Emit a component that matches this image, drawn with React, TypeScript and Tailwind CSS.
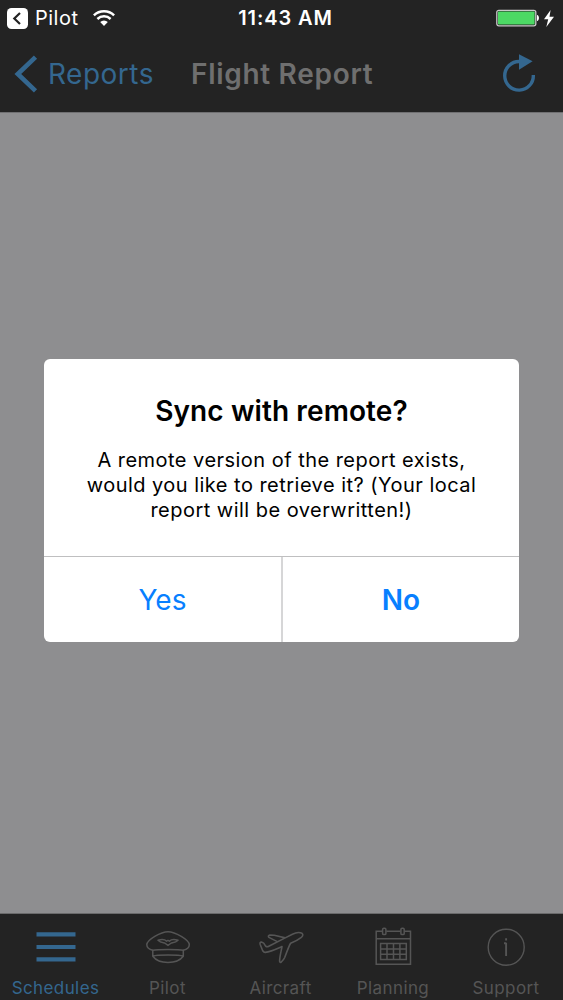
import type { ReactNode } from 'react';

function HatIcon() {
  return (
    <svg width="46" height="40" viewBox="145 927 46 40" fill="none" stroke="currentColor" strokeWidth="1.5" strokeLinejoin="round">
      <path d="M152.8 950.3C149.5 949.4 146.8 947.6 146.8 944.7C146.8 939.8 161 931.7 168 931.7C175 931.7 189.3 939.8 189.3 944.7C189.3 947.6 186.6 949.4 183.3 950.3" />
      <path d="M152.8 956.2V950.3C157 949.1 179 949.1 183.3 950.3V956.2C179 954.7 157 954.7 152.8 956.2C156 960.5 162 962.4 168 962.4C174 962.4 180 960.5 183.3 956.2" />
      <path d="M158 940.2C161.5 939.2 164.8 939.2 166.6 941.2L168 940.3L169.4 941.2C171.2 939.2 174.5 939.2 178 940.2C175.6 942.5 173.3 942.5 171.3 943L168 945.4L164.7 943C162.7 942.5 160.4 942.5 158 940.2Z" />
    </svg>
  );
}

function PlaneIcon() {
  return (
    <svg width="48" height="40" viewBox="257 927 48 40" fill="none" stroke="currentColor" strokeWidth="1.6" strokeLinejoin="round" strokeLinecap="round">
      <path d="M277.3 941.6L268.9 937.4C267.8 936.4 268.6 935.3 269.8 935.1L274.2 935.2L285.2 937.9L292.4 934.2C295.5 932.7 299.6 932.2 302 933.3C303.6 934.5 302.6 936.3 301 937.6C298 940 293.6 942 290.6 943.2C289.3 945.2 285.8 954.5 284.7 957.5C283.9 959.4 282.7 960.7 281.3 962C280.2 962.8 279.5 962.2 279.6 960.8C279.8 956 281.2 951 282 946.6C276.5 949 270.5 951.8 265.3 952.4C264 952.5 263.3 951.7 262.7 950.8L260.2 944.5C259.7 942.7 260.2 941.9 261.4 942L263.7 943.1L265.6 946.1C266.5 946.9 267.8 946.8 268.8 946.3L285.2 937.9" />
    </svg>
  );
}

function CalendarIcon() {
  return (
    <svg width="40" height="40" viewBox="373 928 40 40" fill="none" stroke="currentColor" strokeWidth="1.5">
      <path d="M382.3 932.2H376.2V965.2H410.5V932.2H404.2M386.3 932.2H400.5M376.2 939.7H410.5" />
      <rect x="382.6" y="929.2" width="3.3" height="6.4" rx="1.2" />
      <rect x="400.9" y="929.2" width="3.3" height="6.4" rx="1.2" />
      <path d="M380.6 944.6H406.3V960.6H380.6ZM380.6 950H406.3M380.6 955.3H406.3M387 944.6V960.6M393.5 944.6V960.6M399.9 944.6V960.6" />
    </svg>
  );
}

function InfoIcon() {
  return (
    <svg width="40" height="40" viewBox="0 0 40 40" fill="none" stroke="currentColor">
      <circle cx="20.2" cy="20.2" r="18" strokeWidth="1.4" />
      <path d="M20.1 15.7V29M18 16.2H20.1M20.1 11.2V13.4" strokeWidth="1.9" />
    </svg>
  );
}

function MenuIcon() {
  return (
    <svg width="40" height="40" viewBox="0 0 40 40" fill="currentColor">
      <path d="M0.5 5.2H39.5V9.4H0.5ZM0.5 17.9H39.5V22.1H0.5ZM0.5 30.2H39.5V34.4H0.5Z" />
    </svg>
  );
}

function Tab({ label, active, children }: { label: string; active?: boolean; children: ReactNode }) {
  return (
    <button className={`flex flex-col items-center pt-[13px] ${active ? 'text-[#34678f]' : 'text-[#555555]'}`}>
      <span className="flex h-10 items-center justify-center">{children}</span>
      <span className="mt-[10px] text-[17px] leading-[22px] tracking-[0.4px]">{label}</span>
    </button>
  );
}

export default function App() {
  return (
    <div className="flex h-[1000px] w-full flex-col overflow-hidden bg-[#8e8e90] font-['Inter',sans-serif]">
      <header className="h-[113px] shrink-0 border-b border-[#707072] bg-[#232323]">
        <div className="grid h-9 grid-cols-[1fr_auto_1fr] items-center text-white">
          <div className="flex items-center pl-[7px]">
            <svg width="21" height="21" viewBox="0 0 21 21">
              <rect width="21" height="21" rx="4.5" fill="white" />
              <path d="M13 5L7.3 10.5L13 16" fill="none" stroke="#232323" strokeWidth="2.2" />
            </svg>
            <span className="ml-[7px] text-[20px] leading-6 tracking-[0.5px]">Pilot</span>
            <svg className="ml-[14px]" width="22" height="17" viewBox="0 0 22 17" fill="none" stroke="white" strokeWidth="2.5">
              <path d="M0.9 5.4A14.5 14.5 0 0 1 21.1 5.4M4.4 9A9.5 9.5 0 0 1 17.6 9" />
              <path d="M11 16L7.2 12.1A5.4 5.4 0 0 1 14.8 12.1Z" fill="white" stroke="none" />
            </svg>
          </div>
          <span className="ml-[8px] text-[20px] font-semibold leading-6 tracking-[0.9px]">11:43 AM</span>
          <div className="flex items-center justify-end gap-1 pr-[9px]">
            <svg width="44" height="18" viewBox="0 0 44 18">
              <rect x="0.8" y="1.3" width="39" height="15.5" rx="2" fill="#232323" stroke="#c9c9c9" strokeWidth="1.3" />
              <rect x="2" y="2.5" width="36.6" height="13.1" rx="0.8" fill="#4cd964" />
              <path d="M41 6C43.6 6.4 43.6 11.6 41 12Z" fill="white" />
            </svg>
            <svg width="10" height="17" viewBox="0 0 10 17" fill="white"><path d="M6.6 0L0 9.2H4.2L2.3 17L10 6.8H5.5Z" /></svg>
          </div>
        </div>
        <div className="flex h-[76px] items-center text-[28px] leading-9">
          <button className="flex w-[155px] items-center pl-[14px] text-[#34678f]">
            <svg width="24" height="38" viewBox="0 0 24 38" fill="none" stroke="currentColor" strokeWidth="4.6">
              <path d="M21.5 2.2L3.8 19L21.5 35.8" />
            </svg>
            <span className="ml-[10px] tracking-[0.5px]">Reports</span>
          </button>
          <h1 className="ml-[36px] font-semibold tracking-[0.7px] text-[#6f6f6f]">Flight Report</h1>
          <button className="ml-auto pr-[27px] text-[#34678f]">
            <svg width="34" height="40" viewBox="502 54 34 40">
              <path d="M519 61.5A14.3 14.3 0 1 0 533.3 75" fill="none" stroke="currentColor" strokeWidth="3.4" />
              <path d="M519 54.2L532.6 61.3L519 69.8Z" fill="currentColor" />
            </svg>
          </button>
        </div>
      </header>

      <main className="flex flex-1 flex-col px-11 pt-[246px]">
        <section role="dialog" className="flex h-[283px] w-[475px] flex-col overflow-hidden rounded-[6px] bg-white text-center text-black">
          <div className="h-[197px] pt-[34px]">
            <h2 className="text-[28px] font-semibold leading-9 tracking-[0.1px]">Sync with remote?</h2>
            <p className="mt-[19px] whitespace-nowrap text-[20px] leading-[25px] tracking-[0.47px]">
              A remote version of the report exists,<br />would you like to retrieve it? (Your local<br />report will be overwritten!)
            </p>
          </div>
          <div className="grid flex-1 grid-cols-[239px_236px] border-t border-[#bfbfc0] text-[28px] text-[#087fff]">
            <button className="border-r-2 border-[#d6d6d7]">Yes</button>
            <button className="font-semibold">No</button>
          </div>
        </section>
      </main>

      <nav className="grid h-[87px] shrink-0 grid-cols-[111px_113px_113px_112px_114px] border-t border-[#6a6a6b] bg-[#232323]">
        <Tab label="Schedules" active><MenuIcon /></Tab>
        <Tab label="Pilot"><HatIcon /></Tab>
        <Tab label="Aircraft"><PlaneIcon /></Tab>
        <Tab label="Planning"><CalendarIcon /></Tab>
        <Tab label="Support"><InfoIcon /></Tab>
      </nav>
    </div>
  );
}
